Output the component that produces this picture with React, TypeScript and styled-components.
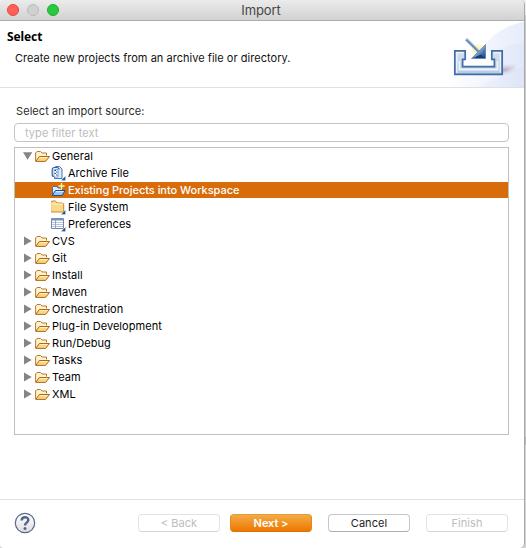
import React from "react";
import styled, { createGlobalStyle, css } from "styled-components";

const GlobalStyle = createGlobalStyle`
  html, body { margin: 0; padding: 0; background: #cfcfcf; overflow: hidden; }
  * { box-sizing: border-box; }
`;

const Desktop = styled.div`
  width: 526px;
  height: 548px;
  display: flex;
  background: linear-gradient(to bottom, #ececec 0 15px, #c9c9c9 15px 437px, #b3b3b3 437px 445px, #d4d4d4 445px);
  font-family: Inter, "Liberation Sans", sans-serif;
  font-size: 11px;
  color: #111;
`;

const Window = styled.div`
  width: 525px;
  height: 548px;
  display: flex;
  flex-direction: column;
  background: #fff;
  border-right: 1px solid #a9a9a9;
  border-radius: 4px 5px 5px 4px;
  overflow: hidden;
`;

const TitleBar = styled.div`
  height: 21px;
  flex: none;
  display: grid;
  grid-template-columns: 60px 1fr 62px;
  align-items: center;
  background: linear-gradient(#ebebeb, #d2d2d2);
  border-bottom: 1px solid #acacac;
`;

const Lights = styled.div`
  display: flex;
  gap: 8px;
  padding-left: 7px;
`;

const Light = styled.span<{ $fill: string; $edge: string }>`
  width: 12px;
  height: 12px;
  border-radius: 50%;
  flex: none;
  background: ${(p) => p.$fill};
  border: 1px solid ${(p) => p.$edge};
`;

const Title = styled.div`
  text-align: center;
  font-size: 13px;
  line-height: 18px;
  letter-spacing: -0.1px;
  color: #464646;
`;

const Header = styled.header`
  height: 67px;
  flex: none;
  display: flex;
  justify-content: space-between;
  border-bottom: 1px solid #e0e0e0;
`;

const HeaderText = styled.div`
  padding: 8px 0 0 7px;
`;

const Heading = styled.h1`
  margin: 0;
  font: bold 12px/16px "Noto Sans", "Open Sans", sans-serif;
  letter-spacing: -0.1px;
  color: #000;
`;

const Description = styled.p`
  margin: 6px 0 0 8px;
  line-height: 14px;
  letter-spacing: 0.03px;
  white-space: nowrap;
`;

const Body = styled.main`
  height: 411px;
  flex: none;
  padding: 15px 15px 0 14px;
`;

const Label = styled.label`
  display: block;
  padding-left: 2px;
  height: 20px;
  line-height: 16px;
  letter-spacing: 0.08px;
  color: #2b2b2b;
`;

const FilterInput = styled.input`
  display: block;
  width: 495px;
  height: 19px;
  padding: 0 10px;
  border: 1px solid #c4c4c4;
  border-radius: 4px;
  outline: none;
  background: #fff;
  font: 11px Inter, sans-serif;
  letter-spacing: 0.06px;
  &::placeholder { color: #bcbcbc; opacity: 1; }
`;

const Tree = styled.div`
  width: 495px;
  height: 288px;
  margin-top: 5px;
  border: 1px solid #bfbfbf;
`;

const Row = styled.div<{ $child?: boolean; $selected?: boolean }>`
  height: 16px;
  margin-bottom: 1px;
  padding-left: ${(p) => (p.$child ? 36 : 8)}px;
  display: flex;
  align-items: center;
  line-height: 16px;
  color: #000;
  ${(p) =>
    p.$selected &&
    css`
      background: #d86b0a;
      color: #fff;
      font-weight: 500;
    `}
`;

const RowLabel = styled.span<{ $spacing: number }>`
  margin-left: 1px;
  white-space: nowrap;
  letter-spacing: ${(p) => p.$spacing}px;
`;

const Disclosure = styled.svg`
  width: 9px;
  height: 10px;
  margin-right: 3px;
  flex: none;
`;

const Glyph = styled.svg`
  width: 16px;
  height: 16px;
  flex: none;
`;

const Footer = styled.footer`
  height: 49px;
  flex: none;
  border-top: 1px solid #e0e0e0;
  display: flex;
  align-items: center;
  padding: 0 16px 2px 14px;
`;

const HelpIcon = styled.svg`
  width: 22px;
  height: 22px;
  margin-right: auto;
`;

const Button = styled.button<{ $primary?: boolean }>`
  width: 82px;
  height: 18px;
  padding: 0;
  margin-left: ${(p) => (p.$primary ? 10 : 16)}px;
  border: 1px solid #c6c6c6;
  border-bottom-color: #adadad;
  border-radius: 4px;
  background: #fff;
  font: 11px/16px Inter, sans-serif;
  letter-spacing: 0.05px;
  color: #222;
  &:disabled { color: #bdbdbd; border-color: #e3e3e3; border-bottom-color: #d6d6d6; }
  ${(p) =>
    p.$primary &&
    css`
      color: #fff;
      font-weight: 600;
      letter-spacing: -0.05px;
      border-color: #e99a32 #e38a1b #d97507;
      background: linear-gradient(#f3ab46, #ee7700);
    `}
`;

const BannerArt = () => (
  <svg width="80" height="66" viewBox="444 21 80 66">
    <defs>
      <linearGradient id="sky" x1="0" x2="1"><stop offset="0" stopColor="#fff" /><stop offset=".5" stopColor="#f3f6fd" /><stop offset="1" stopColor="#e6ecfa" /></linearGradient>
      <linearGradient id="wave" x1="0" x2="1"><stop offset="0" stopColor="#eff3fc" /><stop offset="1" stopColor="#dde5f7" /></linearGradient>
      <linearGradient id="tray" x1="0" y1="0" x2="0" y2="1"><stop offset="0" stopColor="#d6e2f1" /><stop offset="1" stopColor="#b4c9e3" /></linearGradient>
      <linearGradient id="head" x1="0" y1="0" x2="1" y2="1"><stop offset=".35" stopColor="#c3d8ea" /><stop offset=".65" stopColor="#507fb8" /><stop offset="1" stopColor="#173c78" /></linearGradient>
      <radialGradient id="glow"><stop offset="0" stopColor="#fff3ac" /><stop offset=".7" stopColor="#fff8d0" /><stop offset="1" stopColor="#fff" stopOpacity="0" /></radialGradient>
      <radialGradient id="shadow"><stop offset="0" stopColor="#a99bb0" stopOpacity=".8" /><stop offset="1" stopColor="#c9c8df" stopOpacity="0" /></radialGradient>
    </defs>
    <path d="M444 87C449 66 466 56 480 50C491 35 506 25 524 22V87Z" fill="url(#sky)" />
    <path d="M484 62C495 49 509 44 524 43V62C518 67 512 70 506 72Z" fill="url(#wave)" opacity=".7" />
    <path d="M478 87C488 79 512 76 524 63V87Z" fill="url(#wave)" />
    <ellipse cx="504" cy="70" rx="15" ry="6" fill="url(#shadow)" transform="rotate(-12 504 70)" />
    <path d="M463 51V67H494V51Z" fill="#fff" opacity=".75" />
    <circle cx="478" cy="50.5" r="8" fill="url(#glow)" />
    <path d="M454.8 50.8H465.2V59.3H462.6V66.6H494.4V59.3H491.8V50.8H502.2V74.4H454.8Z" fill="url(#tray)" stroke="#426da7" strokeWidth="1.7" />
    <path d="M456.7 73V52.6H463.4M493.6 52.6H500.3V72.5" fill="none" stroke="#f0f5fb" strokeWidth="1.2" />
    <path d="M459.5 61V69.5H497.5V61" fill="none" stroke="#edf3fa" strokeWidth="1.8" />
    <path d="M466 39L481 54" stroke="#b0c7df" strokeWidth="3.2" />
    <path d="M466.3 39.7L481 54" stroke="#5c83b0" strokeWidth="1.6" />
    <path d="M485.5 44.5V58.5H471.5Z" fill="url(#head)" stroke="#58779d" strokeWidth=".7" />
    <path d="M473 58L481 54.5L485 58Z" fill="#153f7c" />
  </svg>
);

const FolderDefs = () => (
  <svg width="0" height="0" display="none">
    <symbol id="openFolder" viewBox="0 0 16 16">
      <path d="M.6 13V5L2 3.5H5.5L7 5H11.5V7.5" fill="#fff2ce" stroke="#b67b28" />
      <path d="M.8 13.4L4.3 8.5H14.5L10.6 13.4Z" fill="#fbd681" stroke="#ad681c" strokeLinejoin="round" />
      <path d="M4.8 9.5H12.6" stroke="#ffefbd" />
    </symbol>
  </svg>
);

type IconKind = "open" | "archive" | "project" | "folder" | "prefs";

const Icon = ({ kind }: { kind: IconKind }) => {
  if (kind === "open") return <Glyph viewBox="0 0 16 16"><use href="#openFolder" /></Glyph>;
  if (kind === "project")
    return (
      <Glyph viewBox="0 0 16 16">
        <path d="M1.5 13V5.5L2.5 4.5H6L7 6H11.5V8" fill="#e2eefb" stroke="#3a6eae" />
        <path d="M1.2 13.5L4.4 8.5H14L11.2 13.5Z" fill="#9ac5f2" stroke="#1e4d9b" strokeLinejoin="round" />
        <path d="M5 9.6H12.5" stroke="#e2f0ff" />
        <path d="M10.5 0.7V7.3M7.2 4H13.8" stroke="#c78919" strokeWidth="2.6" />
        <path d="M10.5 1V7M7.5 4H13.5" stroke="#fff0a6" strokeWidth="1.3" />
      </Glyph>
    );
  return (
    <Glyph viewBox="0 0 16 16">
      {kind === "archive" && (
        <>
          <path d="M4.5 2.5V1.5H8.5L11 4V13.5H3.5V11" fill="#dceafa" stroke="#4778b4" />
          <path d="M8.2 4.5Q8 2.5 5.5 2.5H3.5Q1.2 2.5 1.2 5V9.5Q1.2 11.5 3 11.5" fill="none" stroke="#315ea5" strokeWidth="1.2" />
          <path d="M3 4.5H7V12H3Z" fill="#fff" stroke="#6d94c8" strokeWidth=".8" />
          <path d="M3.5 5.5H5M5 7H6.5M3.5 8.5H5M5 10H6.5" stroke="#234e8c" />
        </>
      )}
      {kind === "folder" && (
        <>
          <path d="M-.4 13V3.5L1 2H4.5L6 4H11.7L12.7 5V13Z" fill="#fbd987" stroke="#c68a31" />
          <path d="M1 5H12" stroke="#fff3c3" />
        </>
      )}
      {kind === "prefs" && (
        <>
          <path d="M.5 2.5H12.5V12.5H.5Z" fill="#fff" stroke="#7888a8" />
          <path d="M1 3.5H12" stroke="#7f91b7" strokeWidth="2" />
          <path d="M1 6.5H12M1 8.5H12M1 10.5H12" stroke="#b5c5df" />
          <path d="M4.5 4V12.5" stroke="#91a5c7" />
        </>
      )}
      <path d="M14.5 11V15.5H10Z" fill="#18558f" stroke="#fff" strokeWidth=".3" />
    </Glyph>
  );
};

const children: { name: string; kind: IconKind; spacing: number; selected?: boolean }[] = [
  { name: "Archive File", kind: "archive", spacing: 0.02 },
  { name: "Existing Projects into Workspace", kind: "project", spacing: -0.03, selected: true },
  { name: "File System", kind: "folder", spacing: 0.05 },
  { name: "Preferences", kind: "prefs", spacing: 0.02 },
];
const categories = ["CVS", "Git", "Install", "Maven", "Orchestration", "Plug-in Development", "Run/Debug", "Tasks", "Team", "XML"];

const Category = ({ name, open }: { name: string; open?: boolean }) => (
  <Row>
    <Disclosure viewBox="0 0 9 10">
      <path d={open ? "M0 1.3H9.3L4.6 8.8Z" : "M1 .6L8.7 5L1 9.4Z"} fill="#858585" />
    </Disclosure>
    <Icon kind="open" />
    <RowLabel $spacing={0.05}>{name}</RowLabel>
  </Row>
);

export default function App() {
  return (
    <Desktop>
      <GlobalStyle />
      <FolderDefs />
      <Window>
        <TitleBar>
          <Lights>
            <Light $fill="#ff5f57" $edge="#e2463f" />
            <Light $fill="#d0d0d0" $edge="#b9b9b9" />
            <Light $fill="#28c940" $edge="#1dad2b" />
          </Lights>
          <Title>Import</Title>
        </TitleBar>
        <Header>
          <HeaderText>
            <Heading>Select</Heading>
            <Description>Create new projects from an archive file or directory.</Description>
          </HeaderText>
          <BannerArt />
        </Header>
        <Body>
          <Label htmlFor="filter">Select an import source:</Label>
          <FilterInput id="filter" placeholder="type filter text" />
          <Tree>
            <Category name="General" open />
            {children.map((c) => (
              <Row key={c.name} $child $selected={c.selected}>
                <Icon kind={c.kind} />
                <RowLabel $spacing={c.spacing}>{c.name}</RowLabel>
              </Row>
            ))}
            {categories.map((name) => <Category key={name} name={name} />)}
          </Tree>
        </Body>
        <Footer>
          <HelpIcon viewBox="0 0 22 22">
            <defs><linearGradient id="help" x1="0" y1="0" x2="0" y2="1"><stop stopColor="#fff" /><stop offset="1" stopColor="#dedede" /></linearGradient></defs>
            <circle cx="11" cy="11" r="9.7" fill="url(#help)" stroke="#5a6b8c" strokeWidth="1.2" />
            <path d="M7.7 8.4C7.7 4.2 14.3 4.3 14.3 8C14.3 10.7 11 10.6 11 13.6" fill="none" stroke="#52658b" strokeWidth="2.4" />
            <circle cx="11" cy="16.6" r="1.5" fill="#52658b" />
          </HelpIcon>
          <Button disabled>&lt; Back</Button>
          <Button $primary>Next &gt;</Button>
          <Button>Cancel</Button>
          <Button disabled>Finish</Button>
        </Footer>
      </Window>
    </Desktop>
  );
}
